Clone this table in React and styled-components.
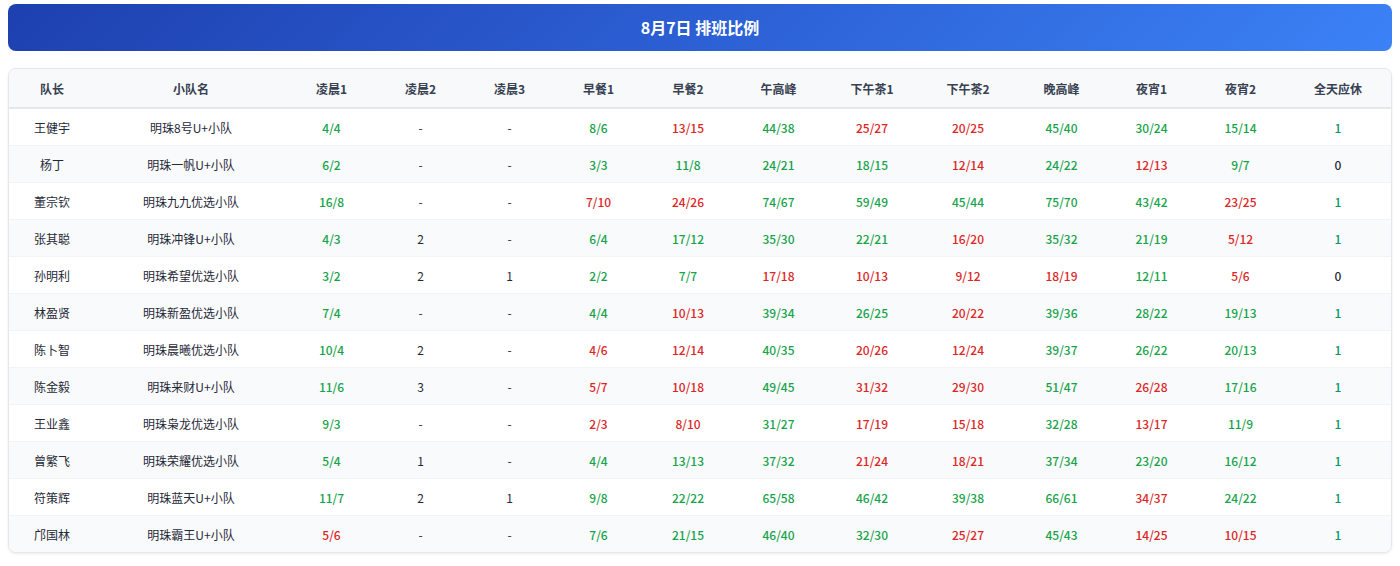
import React from "react";
import styled, { createGlobalStyle } from "styled-components";

const GlobalStyle = createGlobalStyle`
  html, body { margin: 0; padding: 0; background: #ffffff; }
  body { font-family: "Noto Sans CJK SC", "Noto Sans", sans-serif; color: #1f2937; }
`;

const Page = styled.div`
  padding: 4px 8px 12px;
`;

const TitleBar = styled.h1`
  margin: 0;
  padding: 14px 0;
  line-height: 19px;
  font-size: 16px;
  font-weight: 700;
  color: #ffffff;
  text-align: center;
  border-radius: 8px;
  background: linear-gradient(135deg, #1e40af 0%, #2c5fd4 50%, #3b82f6 100%);
`;

const Card = styled.div`
  margin-top: 17px;
  border: 1px solid #e5e7eb;
  border-radius: 8px;
  overflow: hidden;
  background: #ffffff;
  box-shadow: 0 1px 3px rgba(0, 0, 0, 0.08);
`;

const Table = styled.table`
  width: 100%;
  border-collapse: collapse;
  table-layout: fixed;
  font-size: 12px;
`;

const HeadCell = styled.th`
  height: 38px;
  padding: 0;
  background: #f8f9fb;
  border-bottom: 2px solid #e5e7eb;
  color: #374151;
  font-weight: 600;
  text-align: center;
`;

const Row = styled.tr`
  background: ${(p) => (p.$striped ? "#f9fafb" : "#ffffff")};
  &:not(:last-child) td { border-bottom: 1px solid #f1f3f5; }
`;

const Cell = styled.td`
  height: 36px;
  padding: 0;
  text-align: center;
  font-weight: ${(p) => (p.$tone === "plain" || p.$tone === "name" ? 400 : 500)};
  color: ${(p) =>
    p.$tone === "good"
      ? "#16a34a"
      : p.$tone === "bad"
      ? "#dc2626"
      : p.$tone === "rest"
      ? "#059669"
      : p.$tone === "zero"
      ? "#1e293b"
      : "#1f2937"};
`;

const widths = [86, 192, 89, 89, 89, 89, 90, 91, 96, 96, 91, 89, 89, 106];
const headers = ["队长", "小队名", "凌晨1", "凌晨2", "凌晨3", "早餐1", "早餐2", "午高峰", "下午茶1", "下午茶2", "晚高峰", "夜宵1", "夜宵2", "全天应休"];

const rows = [
  ["王健宇", "明珠8号U+小队", "4/4", "-", "-", "8/6", "13/15", "44/38", "25/27", "20/25", "45/40", "30/24", "15/14", "1"],
  ["杨丁", "明珠一帆U+小队", "6/2", "-", "-", "3/3", "11/8", "24/21", "18/15", "12/14", "24/22", "12/13", "9/7", "0"],
  ["董宗钦", "明珠九九优选小队", "16/8", "-", "-", "7/10", "24/26", "74/67", "59/49", "45/44", "75/70", "43/42", "23/25", "1"],
  ["张其聪", "明珠冲锋U+小队", "4/3", "2", "-", "6/4", "17/12", "35/30", "22/21", "16/20", "35/32", "21/19", "5/12", "1"],
  ["孙明利", "明珠希望优选小队", "3/2", "2", "1", "2/2", "7/7", "17/18", "10/13", "9/12", "18/19", "12/11", "5/6", "0"],
  ["林盈贤", "明珠新盈优选小队", "7/4", "-", "-", "4/4", "10/13", "39/34", "26/25", "20/22", "39/36", "28/22", "19/13", "1"],
  ["陈卜智", "明珠晨曦优选小队", "10/4", "2", "-", "4/6", "12/14", "40/35", "20/26", "12/24", "39/37", "26/22", "20/13", "1"],
  ["陈金毅", "明珠来财U+小队", "11/6", "3", "-", "5/7", "10/18", "49/45", "31/32", "29/30", "51/47", "26/28", "17/16", "1"],
  ["王业鑫", "明珠枭龙优选小队", "9/3", "-", "-", "2/3", "8/10", "31/27", "17/19", "15/18", "32/28", "13/17", "11/9", "1"],
  ["曾繁飞", "明珠荣耀优选小队", "5/4", "1", "-", "4/4", "13/13", "37/32", "21/24", "18/21", "37/34", "23/20", "16/12", "1"],
  ["符策辉", "明珠蓝天U+小队", "11/7", "2", "1", "9/8", "22/22", "65/58", "46/42", "39/38", "66/61", "34/37", "24/22", "1"],
  ["邝国林", "明珠霸王U+小队", "5/6", "-", "-", "7/6", "21/15", "46/40", "32/30", "25/27", "45/43", "14/25", "10/15", "1"],
];

function toneOf(value, col) {
  if (col <= 1) return "name";
  if (col === 13) return value === "0" ? "zero" : "rest";
  if (value.includes("/")) {
    const [a, b] = value.split("/").map(Number);
    return a >= b ? "good" : "bad";
  }
  return "plain";
}

export default function App() {
  return (
    <>
      <GlobalStyle />
      <Page>
        <TitleBar>8月7日 排班比例</TitleBar>
        <Card>
          <Table>
            <colgroup>
              {widths.map((w, i) => (
                <col key={i} style={{ width: `${w}px` }} />
              ))}
            </colgroup>
            <thead>
              <tr>
                {headers.map((h) => (
                  <HeadCell key={h}>{h}</HeadCell>
                ))}
              </tr>
            </thead>
            <tbody>
              {rows.map((r, ri) => (
                <Row key={ri} $striped={ri % 2 === 1}>
                  {r.map((v, ci) => (
                    <Cell key={ci} $tone={toneOf(v, ci)}>
                      {v}
                    </Cell>
                  ))}
                </Row>
              ))}
            </tbody>
          </Table>
        </Card>
      </Page>
    </>
  );
}
